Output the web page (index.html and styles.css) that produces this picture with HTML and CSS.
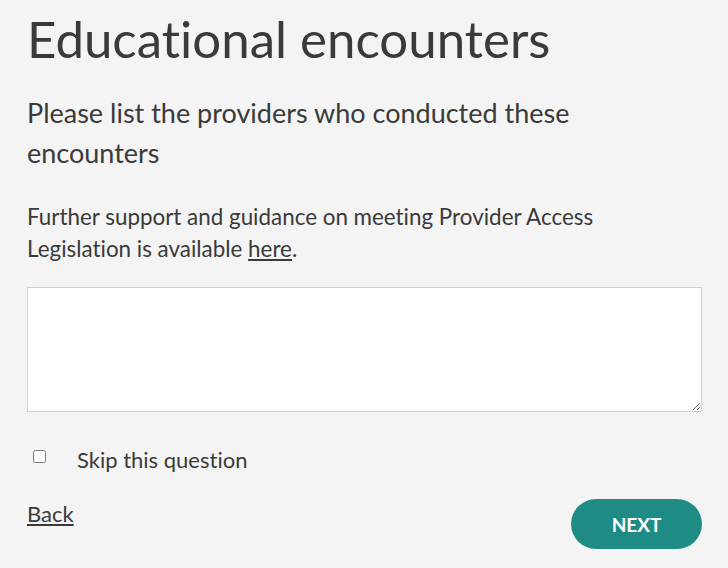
FILE: index.html
```html
<!DOCTYPE html>
<html lang="en">
<head>
    <meta charset="UTF-8">
    <meta name="viewport" content="width=device-width, initial-scale=1.0">
    <title>Educational encounters</title>
    <link rel="stylesheet" href="styles.css">
</head>
<body>
    <main class="question">
        <h1>Educational encounters</h1>
        <h2>Please list the providers who conducted these encounters</h2>
        <p class="help">Further support and guidance on meeting Provider Access Legislation is available <a href="#">here</a>.</p>

        <textarea class="answer"></textarea>

        <label class="skip">
            <input type="checkbox">
            <span>Skip this question</span>
        </label>

        <div class="nav">
            <a href="#" class="back">Back</a>
            <button type="button" class="next">NEXT</button>
        </div>
    </main>
</body>
</html>
```

FILE: styles.css
```css
* {
    box-sizing: border-box;
    margin: 0;
    padding: 0;
}

body {
    background-color: #f4f4f4;
    color: #3a3a3a;
    font-family: Lato, "Open Sans", sans-serif;
    font-variant-ligatures: none;
}

.question {
    padding: 7px 26px 0 27px;
    display: flex;
    flex-direction: column;
}

h1 {
    font-size: 51px;
    font-weight: 400;
    line-height: 64px;
    margin-bottom: 22px;
}

h2,
.help {
    max-width: 600px;
    font-weight: 400;
}

h2 {
    font-size: 27px;
    line-height: 40px;
    margin-bottom: 28px;
}

.help {
    font-size: 22.4px;
    line-height: 32px;
    margin-bottom: 22px;
}

.help a,
.back {
    color: #3a3a3a;
    text-decoration: underline;
}

.answer {
    display: block;
    width: 100%;
    height: 125px;
    border: 1px solid #cfcfcf;
    background: white;
    font-family: inherit;
    font-size: 18px;
    padding: 8px;
    margin-bottom: 35px;
}

.skip {
    display: flex;
    align-items: flex-start;
    gap: 31px;
    padding-left: 6px;
    font-size: 22px;
    line-height: 26px;
    margin-bottom: 26px;
}

.skip input {
    width: 13px;
    height: 13px;
    margin: 3px 0 0;
}

.nav {
    display: flex;
    justify-content: space-between;
    align-items: flex-start;
}

.back {
    font-size: 22px;
    line-height: 30px;
}

.next {
    width: 131px;
    height: 50px;
    border: none;
    border-radius: 25px;
    background-color: #1e8c85;
    color: white;
    font-family: inherit;
    font-size: 19px;
    font-weight: 700;
    cursor: pointer;
}
```
